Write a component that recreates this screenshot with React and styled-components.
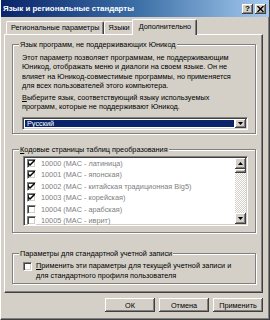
import React from "react";
import styled, { createGlobalStyle } from "styled-components";

const FONT = `"Liberation Sans", Arial, sans-serif`;
const FS = "7.3px";

const Global = createGlobalStyle`
  html, body { margin: 0; padding: 0; background: #d4d0c8; }
  * { box-sizing: border-box; }
  body { font-family: ${FONT}; font-size: ${FS}; color: #000; }
`;

const Window = styled.div`
  width: 270px;
  height: 320px;
  background: #d4d0c8;
  display: flex;
  flex-direction: column;
  border-left: 1px solid #fff;
  border-right: 1px solid #404040;
  border-bottom: 1px solid #404040;
  box-shadow: inset -1px -1px 0 #808080;
  overflow: hidden;
`;

const TitleBar = styled.div`
  height: 17px;
  flex: none;
  display: flex;
  align-items: center;
  padding: 0 3px 0 2px;
  background: linear-gradient(90deg, #0a246a 0%, #3a6ea5 50%, #a6caf0 100%);
`;

const Title = styled.div`
  flex: 1;
  color: #fff;
  font-weight: bold;
  font-size: 7.9px;
  white-space: nowrap;
`;

const CapButton = styled.div`
  width: 11px;
  height: 10px;
  margin-left: ${p => p.$gap || 0}px;
  background: #d4d0c8;
  box-shadow: inset -1px -1px 0 #404040, inset 1px 1px 0 #fff, inset -2px -2px 0 #808080;
  display: flex;
  align-items: center;
  justify-content: center;
  font-size: 8px;
  font-weight: bold;
  line-height: 1;
  color: #000;
`;

const Tabs = styled.div`
  display: flex;
  align-items: flex-end;
  height: 15px;
  margin-top: 2px;
  padding-left: 5px;
  position: relative;
  z-index: 1;
`;

const Tab = styled.div`
  height: ${p => (p.$active ? 16 : 13)}px;
  margin-left: ${p => (p.$active ? -2 : 0)}px;
  margin-bottom: ${p => (p.$active ? -1 : 0)}px;
  padding: ${p => (p.$active ? "2px 5px 0 6px" : "1px 3px 0 4px")};
  background: #d4d0c8;
  border-top: 1px solid #fff;
  border-left: 1px solid #fff;
  border-right: 1px solid #404040;
  box-shadow: inset -1px 0 0 #808080;
  border-radius: 2px 2px 0 0;
  white-space: nowrap;
  line-height: 10px;
  color: #000;
`;

const Panel = styled.div`
  margin: 0 6px 0 3px;
  height: 259px;
  flex: none;
  border-top: 1px solid #fff;
  border-left: 1px solid #fff;
  border-right: 1px solid #404040;
  border-bottom: 1px solid #404040;
  box-shadow: inset -1px -1px 0 #808080;
  padding: 9px 6px 0 7px;
  display: flex;
  flex-direction: column;
`;

const Group = styled.div`
  position: relative;
  margin-top: ${p => p.$mt || 0}px;
  height: ${p => p.$h}px;
  flex: none;
  padding: ${p => p.$pad};
  border: 1px solid #808080;
  box-shadow: inset 1px 1px 0 #fff, 1px 1px 0 #fff;
`;

const Legend = styled.div`
  position: absolute;
  top: -5px;
  left: 6px;
  padding: 0 1px 0 1px;
  background: #d4d0c8;
  line-height: 9px;
  white-space: nowrap;
  color: #000;
`;

const Para = styled.p`
  margin: ${p => p.$mt || 0}px 0 0 0;
  line-height: ${p => p.$lh || 9.3}px;
  white-space: nowrap;
`;

const U = styled.span`
  text-decoration: underline;
`;

const Select = styled.div`
  margin-top: 5px;
  height: 13px;
  background: #fff;
  border-top: 1px solid #808080;
  border-left: 1px solid #808080;
  border-right: 1px solid #fff;
  border-bottom: 1px solid #fff;
  box-shadow: inset 1px 1px 0 #404040, inset -1px -1px 0 #d4d0c8;
  padding: 2px;
  display: flex;
`;

const SelectValue = styled.div`
  flex: 1;
  background: #0a246a;
  color: #fff;
  line-height: 7px;
  padding: 0 2px;
`;

const ArrowBtn = styled.div`
  width: 11px;
  margin: -1px -1px -1px 1px;
  background: #d4d0c8;
  box-shadow: inset -1px -1px 0 #404040, inset 1px 1px 0 #fff, inset -2px -2px 0 #808080;
  display: flex;
  align-items: center;
  justify-content: center;
`;

const ListBox = styled.div`
  height: 70px;
  width: 225px;
  background: #fff;
  border-top: 1px solid #808080;
  border-left: 1px solid #808080;
  border-right: 1px solid #fff;
  border-bottom: 1px solid #fff;
  box-shadow: inset 1px 1px 0 #404040, inset -1px -1px 0 #d4d0c8;
  padding: 1px 2px 1px 2px;
  display: flex;
  overflow: hidden;
`;

const Items = styled.div`
  flex: 1;
  padding: 1px 0 0 1px;
  display: flex;
  flex-direction: column;
  gap: 2.4px;
`;

const Item = styled.div`
  display: flex;
  align-items: center;
  height: 9px;
  flex: none;
  gap: 5px;
  color: #808080;
  white-space: nowrap;
`;

const Box = styled.div`
  width: 9px;
  height: 9px;
  flex: none;
  margin-top: ${p => p.$mt || 0}px;
  background: #fff;
  border-top: 1px solid #808080;
  border-left: 1px solid #808080;
  border-right: 1px solid #fff;
  border-bottom: 1px solid #fff;
  box-shadow: inset 1px 1px 0 #404040, inset -1px -1px 0 #d4d0c8;
  display: flex;
  align-items: center;
  justify-content: center;
`;

const ScrollBar = styled.div`
  width: 11px;
  margin: 0 -1px 0 0;
  display: flex;
  flex-direction: column;
`;

const ScrollBtn = styled.div`
  height: 11px;
  flex: none;
  background: #d4d0c8;
  box-shadow: inset -1px -1px 0 #404040, inset 1px 1px 0 #fff, inset -2px -2px 0 #808080;
  display: flex;
  align-items: center;
  justify-content: center;
`;

const Thumb = styled(ScrollBtn)`
  height: 4px;
`;

const Track = styled.div`
  flex: 1;
  background-color: #fff;
  background-image: repeating-conic-gradient(#d4d0c8 0 25%, #fff 0 50%);
  background-size: 2px 2px;
`;

const CheckRow = styled.div`
  display: flex;
  align-items: flex-start;
  gap: 4px;
`;

const ButtonRow = styled.div`
  display: flex;
  justify-content: flex-end;
  gap: 4px;
  margin: 5px 6px 0 0;
`;

const Button = styled.div`
  width: ${p => p.$w || 50}px;
  height: 14px;
  background: #d4d0c8;
  box-shadow: inset -1px -1px 0 #404040, inset 1px 1px 0 #fff, inset -2px -2px 0 #808080;
  display: flex;
  align-items: center;
  justify-content: center;
  color: #000;
`;

const Check = () => (
  <svg width="7" height="7" viewBox="0 0 7 7">
    <path d="M0 2 L0 4 L2 6 L7 1 L7 -1 L2 4 Z" fill="#000" />
  </svg>
);

const Tri = ({ up }) => (
  <svg width="5" height="3" viewBox="0 0 5 3">
    <path d={up ? "M2.5 0 L5 3 L0 3 Z" : "M0 0 L5 0 L2.5 3 Z"} fill="#000" />
  </svg>
);

const items = [
  ["10000 (MAC - латиница)", true],
  ["10001 (MAC - японская)", true],
  ["10002 (MAC - китайская традиционная Big5)", true],
  ["10003 (MAC - корейская)", true],
  ["10004 (MAC - арабская)", false],
  ["10005 (MAC - иврит)", false],
];

export default function App() {
  return (
    <>
      <Global />
      <Window>
        <TitleBar>
          <Title>Язык и региональные стандарты</Title>
          <CapButton>?</CapButton>
          <CapButton $gap={2}>
            <svg width="7" height="6" viewBox="0 0 7 6">
              <path d="M0.5 0 L6.5 6 M6.5 0 L0.5 6" stroke="#000" strokeWidth="1.4" />
            </svg>
          </CapButton>
        </TitleBar>
        <Tabs>
          <Tab>Региональные параметры</Tab>
          <Tab>Языки</Tab>
          <Tab $active>Дополнительно</Tab>
        </Tabs>
        <Panel>
          <Group $h={90} $pad="8px 7px 0 9px">
            <Legend>Язык программ, не поддерживающих Юникод</Legend>
            <Para>
              Этот параметр позволяет программам, не поддерживающим<br />
              Юникод, отображать меню и диалоги на своем языке. Он не<br />
              влияет на Юникод-совместимые программы, но применяется<br />
              для всех пользователей этого компьютера.
            </Para>
            <Para $mt={3}>
              <U>В</U>ыберите язык, соответствующий языку используемых<br />
              программ, которые не поддерживают Юникод.
            </Para>
            <Select>
              <SelectValue>Русский</SelectValue>
              <ArrowBtn><Tri /></ArrowBtn>
            </Select>
          </Group>
          <Group $h={84} $mt={15} $pad="6px 0 0 10px">
            <Legend><U>К</U>одовые страницы таблиц преобразования</Legend>
            <ListBox>
              <Items>
                {items.map(([t, c]) => (
                  <Item key={t}>
                    <Box>{c && <Check />}</Box>
                    {t}
                  </Item>
                ))}
              </Items>
              <ScrollBar>
                <ScrollBtn><Tri up /></ScrollBtn>
                <Thumb />
                <Track />
                <ScrollBtn><Tri /></ScrollBtn>
              </ScrollBar>
            </ListBox>
          </Group>
          <Group $h={31} $mt={20} $pad="7px 0 0 10px">
            <Legend>Параметры для стандартной учетной записи</Legend>
            <CheckRow>
              <Box $mt={1} />
              <Para $lh={10}>
                <U>П</U>рименить эти параметры для текущей учетной записи и<br />
                для стандартного профиля пользователя
              </Para>
            </CheckRow>
          </Group>
        </Panel>
        <ButtonRow>
          <Button $w={50}>ОК</Button>
          <Button $w={50}>Отмена</Button>
          <Button $w={50}>Применить</Button>
        </ButtonRow>
      </Window>
    </>
  );
}
